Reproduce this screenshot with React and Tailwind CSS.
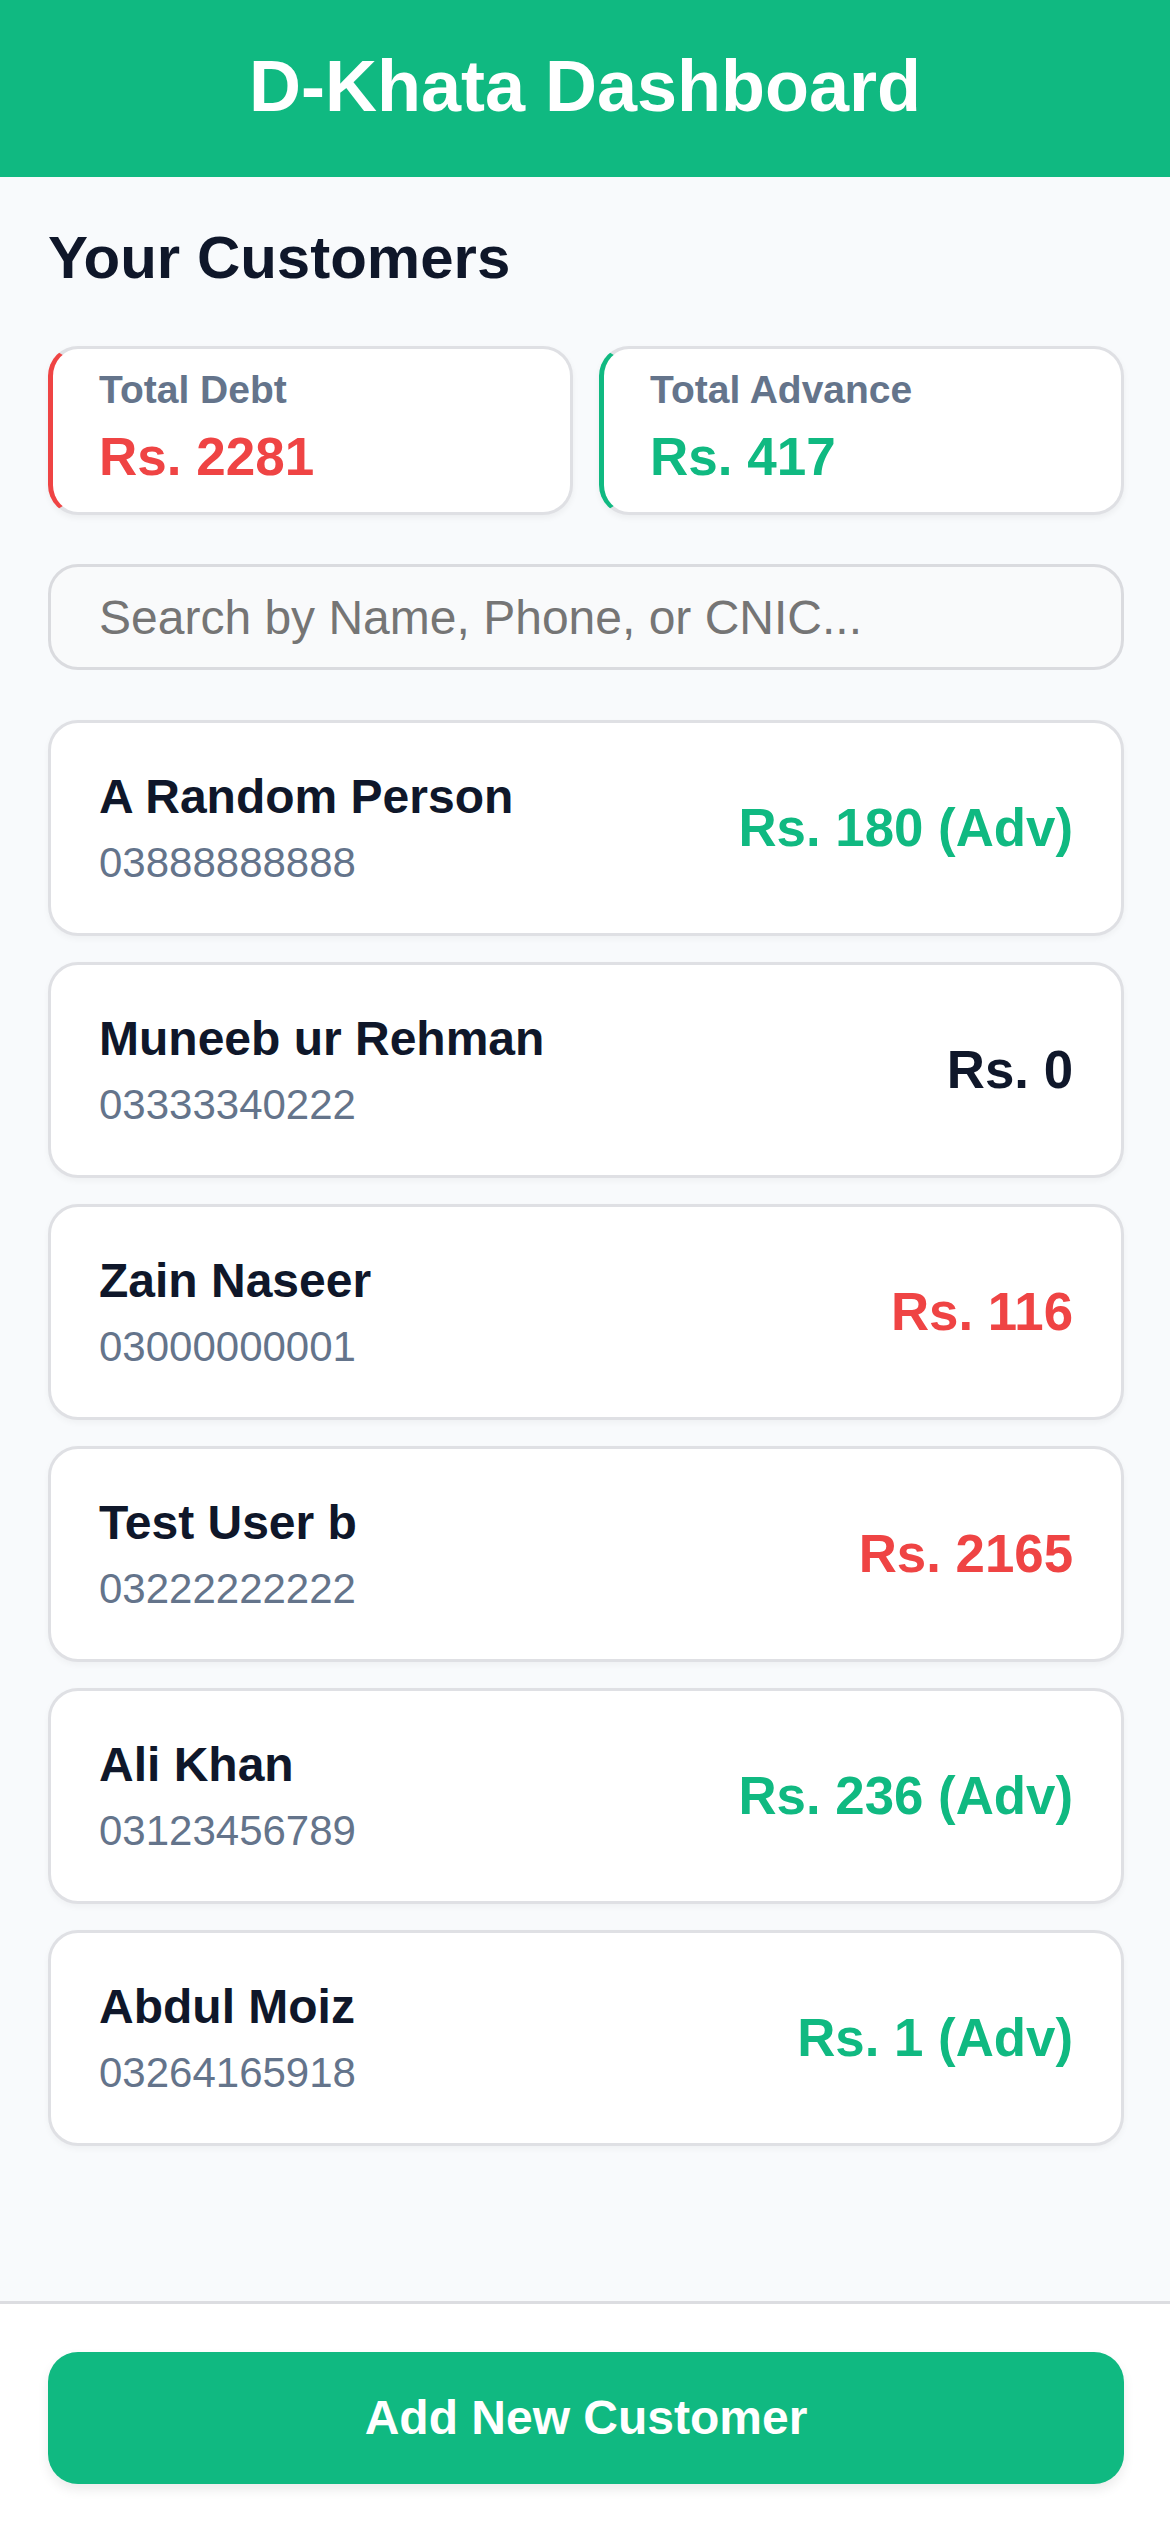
import React from "react";

const customers = [
  { name: "A Random Person", phone: "03888888888", balance: -180 },
  { name: "Muneeb ur Rehman", phone: "03333340222", balance: 0 },
  { name: "Zain Naseer", phone: "03000000001", balance: 116 },
  { name: "Test User b", phone: "03222222222", balance: 2165 },
  { name: "Ali Khan", phone: "03123456789", balance: -236 },
  { name: "Abdul Moiz", phone: "03264165918", balance: -1 },
];

function Amount({ balance }) {
  if (balance < 0) {
    return (
      <p className="text-[52.8px] font-bold text-[#10b981]">
        Rs. {Math.abs(balance)} (Adv)
      </p>
    );
  }
  if (balance > 0) {
    return <p className="text-[52.8px] font-bold text-[#ef4444]">Rs. {balance}</p>;
  }
  return <p className="text-[52.8px] font-bold text-[#0f172a]">Rs. 0</p>;
}

function SummaryCard({ label, value, debt }) {
  return (
    <div
      className={`bg-white rounded-[30px] border-[3px] border-[#dfe0e4] border-l-[5px] ${
        debt ? "border-l-[#ef4444]" : "border-l-[#10b981]"
      } pl-[46px] pr-[40px] pt-[12px] pb-[16px] shadow-[0_3px_6px_rgba(0,0,0,0.05)]`}
    >
      <p className="text-[39px] font-bold leading-[57px] text-[#64748b]">{label}</p>
      <p className={`text-[53px] font-bold leading-[78px] ${debt ? "text-[#ef4444]" : "text-[#10b981]"}`}>
        {value}
      </p>
    </div>
  );
}

export default function App() {
  return (
    <div className="h-screen flex flex-col bg-[#f8fafc] font-['Liberation_Sans',Arial,sans-serif]">
      {/* Header */}
      <header className="h-[177px] shrink-0 bg-[#10b981] flex items-center justify-center pb-[6px]">
        <h1 className="text-[72px] font-bold text-white">D-Khata Dashboard</h1>
      </header>

      {/* Main */}
      <main className="flex-1 overflow-hidden pl-[48px] pr-[46px] pt-[37px]">
        <h2 className="text-[60px] font-bold text-[#0f172a] leading-[88px] mb-[44px]">
          Your Customers
        </h2>

        <div className="grid grid-cols-2 gap-[26px] mb-[49px]">
          <SummaryCard label="Total Debt" value="Rs. 2281" debt />
          <SummaryCard label="Total Advance" value="Rs. 417" />
        </div>

        <input
          type="text"
          placeholder="Search by Name, Phone, or CNIC..."
          className="w-full h-[106px] rounded-[30px] border-[3px] border-[#dadbdf] bg-[#f9fafb] px-[48px] text-[48px] text-[#0f172a] placeholder:text-[#757575] outline-none mb-[50px]"
        />

        <div className="flex flex-col gap-[26px]">
          {customers.map((c) => (
            <div
              key={c.phone}
              className="bg-white rounded-[30px] border-[3px] border-[#dfe0e4] px-[48px] py-[39px] flex items-center justify-between shadow-[0_3px_6px_rgba(0,0,0,0.04)]"
            >
              <div>
                <p className="text-[48px] font-bold leading-[69px] text-[#0f172a]">{c.name}</p>
                <p className="text-[42px] leading-[63px] text-[#64748b]">{c.phone}</p>
              </div>
              <Amount balance={c.balance} />
            </div>
          ))}
        </div>
      </main>

      {/* Footer */}
      <footer className="shrink-0 bg-white border-t-[3px] border-[#dcdde1] pl-[48px] pr-[46px] py-[48px]">
        <button className="w-full h-[132px] rounded-[30px] bg-[#10b981] text-white text-[48px] font-bold shadow-[0_6px_12px_rgba(0,0,0,0.08)]">
          Add New Customer
        </button>
      </footer>
    </div>
  );
}
